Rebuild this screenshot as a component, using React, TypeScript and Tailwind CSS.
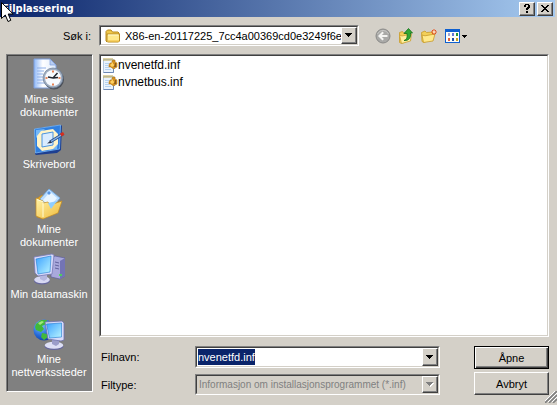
import { useEffect, useRef, useState, type ComponentType, type ReactNode } from "react";

const sunken = "border border-t-[#808080] border-l-[#808080] border-r-white border-b-white";
const sunkenInner = "border border-t-[#404040] border-l-[#404040] border-r-[#d4d0c8] border-b-[#d4d0c8]";
const raised =
  "border border-t-white border-l-white border-r-[#404040] border-b-[#404040] shadow-[inset_-1px_-1px_0_#808080] bg-[#d4d0c8]";

const files = ["nvenetfd.inf", "nvnetbus.inf"];

function RecentIcon() {
  return (
    <svg viewBox="0 0 32 32" className="size-8">
      <defs>
        <linearGradient id="recent-page" x1="0" y1="0" x2="1" y2="0">
          <stop offset="0" stopColor="#8fb8f8" />
          <stop offset="0.4" stopColor="#ffffff" />
          <stop offset="1" stopColor="#dce9fb" />
        </linearGradient>
      </defs>
      <path d="M1 1h16l6 6v23H1z" fill="url(#recent-page)" stroke="#7f9fdc" />
      <path d="M17 1v6h6z" fill="#b7cdf2" stroke="#7f9fdc" strokeWidth="0.7" />
      <path d="M4 10h9M4 13h7M4 16h6M4 19h6M4 22h7M4 25h9" stroke="#8fb0e8" />
      <circle cx="21" cy="21.500" r="10" fill="#4a4f58" />
      <circle cx="20" cy="20" r="10" fill="#9fadc0" stroke="#6e7f98" strokeWidth="0.7" />
      <circle cx="20" cy="20" r="8" fill="#f6faff" />
      <path d="M20 12.500v2M20 25.500v2M12.500 20h2M25.500 20h2" stroke="#e2622a" strokeWidth="1.6" />
      <path d="M24.500 15l-4.500 5-5-1M20 20l5-.5" stroke="#20252f" strokeWidth="1.5" fill="none" />
    </svg>
  );
}

function DesktopIcon() {
  return (
    <svg viewBox="0 0 32 32" className="size-8">
      <path d="M2 6l4-1 22-3 1 1-1 24-4 3-21 2-1-1z" fill="#1d3f91" />
      <path d="M1.500 6l26-4-1 24-24 4z" fill="#2f7fe0" stroke="#78b7f5" strokeWidth="0.8" />
      <path d="M3 7l9-1-9 9zM25 18l-1 8-9 1z" fill="#75b8f7" />
      <path d="M8 8l12-2 5 5v10l-5 5-11 2-5-5V13z" fill="#fff4c8" />
      <path d="M9 11l11-2v13L9 24z" fill="#d9ecff" stroke="#4a94df" />
      <path d="M17 19l13-8" stroke="#274f88" strokeWidth="3" />
      <path d="M17 19l12-7.400" stroke="#8ab4e8" strokeWidth="1.3" />
      <path d="M27 10.500l3-1.500 1.500 2.600-3 1.800z" fill="#d62c1c" />
      <path d="M14 20.500l3.400-2.800 1.400 2.400z" fill="#30384c" />
    </svg>
  );
}

function DocumentsIcon() {
  return (
    <svg viewBox="0 0 32 32" className="size-8">
      <defs>
        <linearGradient id="doc-folder" x1="0" y1="0" x2="1" y2="1">
          <stop offset="0" stopColor="#fff3a9" />
          <stop offset="1" stopColor="#efb938" />
        </linearGradient>
      </defs>
      <path d="M3 11l6-4 3 2 13-1v11L10 31l-6-2z" fill="#e4a82e" stroke="#b78122" strokeWidth="0.6" />
      <path d="M7 11L16 1l11 9-9 11z" fill="#b8dcff" stroke="#6da9e6" strokeWidth="0.8" />
      <path d="M10 12l7-8 7 6-7 9z" fill="#e8f5ff" />
      <path d="M16 3l2 2-2 2-2-2z" fill="#5795e4" />
      <path d="M3 10l7 3v2l5-1 2 3 12-4-4 12-15 6-7-3z" fill="url(#doc-folder)" stroke="#c18b24" strokeWidth="0.7" />
      <path d="M15 15l9-2-6 8z" fill="#8fceff" />
      <path d="M4 11.500l6 2.300V29" stroke="#fffbd5" fill="none" />
    </svg>
  );
}

function ComputerIcon() {
  return (
    <svg viewBox="0 0 32 32" className="size-8">
      <defs>
        <linearGradient id="pc-screen" x1="0" y1="0" x2="1" y2="1">
          <stop offset="0" stopColor="#3ca1ff" />
          <stop offset="1" stopColor="#b9f5ff" />
        </linearGradient>
      </defs>
      <path d="M18 5l4-2 10 2v18l-5 3-9-2z" fill="#a9a9dc" stroke="#5e5f9c" strokeWidth="0.7" />
      <path d="M27 8l5-3v18l-5 3z" fill="#7374b4" />
      <path d="M22 9l4 1M22 12l4 1M22 15l4 1" stroke="#62639e" />
      <path d="M26 22h3" stroke="#49e149" strokeWidth="1.7" />
      <ellipse cx="9" cy="28" rx="8" ry="3.500" fill="#66679d" />
      <ellipse cx="9" cy="26.800" rx="7.800" ry="3.500" fill="#d7d8f2" />
      <path d="M7 21h7v5l-3 2-4-2z" fill="#b5b7df" />
      <path d="M1 4l18-3 2 1-2 19-14 2-3-3z" fill="#d8dbfa" stroke="#7779b5" strokeWidth="0.8" />
      <path d="M3 6l15-3-1 16-12 2z" fill="url(#pc-screen)" stroke="#217cd2" strokeWidth="0.6" />
    </svg>
  );
}

function NetworkIcon() {
  return (
    <svg viewBox="0 0 32 32" className="size-8">
      <defs>
        <radialGradient id="globe" cx="0.35" cy="0.3" r="0.8">
          <stop offset="0" stopColor="#7fc8ff" />
          <stop offset="0.6" stopColor="#2367d8" />
          <stop offset="1" stopColor="#123a92" />
        </radialGradient>
      </defs>
      <circle cx="11" cy="12" r="10.500" fill="url(#globe)" />
      <path d="M3 6l5-4 6 0-1 4-4 2 2 3-3 3-5-2-1-3zM9 15l5 1 1 3-4 3-3-3zM17 3l4 5-3 1-3-3z" fill="#42b83b" />
      <path d="M5 5l4-2 2 1-4 3z" fill="#a1e978" />
      <ellipse cx="21" cy="28.500" rx="9.500" ry="3.500" fill="#66679d" />
      <ellipse cx="21" cy="27.300" rx="9.300" ry="3.500" fill="#dddff5" />
      <path d="M19 20h7v6l-3 2-4-2z" fill="#9b9dc9" />
      <path d="M12 4l17-1 2 2v17l-3 1-13-2z" fill="#d8dbfa" stroke="#6e70aa" strokeWidth="0.8" />
      <path d="M13.500 6l15-1v14l-12 1z" fill="url(#pc-screen)" stroke="#217cd2" strokeWidth="0.6" />
    </svg>
  );
}

function FolderIcon() {
  return (
    <svg viewBox="0 0 16 16" className="size-4">
      <path d="M1 3.500L2.500 2H6l1.500 2H13l1 1v2H4L2 14l-1-1z" fill="#efc84b" stroke="#b88a1e" />
      <path d="M2 13.500V6h12.500V13l-1 1h-11z" fill="#ffe98b" stroke="#b88a1e" />
      <path d="M3 7h10.500" stroke="#fffbd0" />
      <path d="M3 13h11" stroke="#f0bb3f" />
    </svg>
  );
}

function InfIcon() {
  return (
    <svg viewBox="0 0 16 16" className="size-4 shrink-0">
      <path d="M1.500 2.500h10v13h-10z" fill="#eaf3fd" stroke="#b4c8de" />
      <path d="M11.500 12v3.500h-10" stroke="#6d88b4" fill="none" />
      <path d="M2 1v3M4 1v3M6 1v3M8 1v3M10 1v3" stroke="#c0a64b" />
      <path d="M3 6.500h4M3 8.500h3M3 10.500h4M3 12.500h6" stroke="#b5d3f0" />
      <path d="M10 4l1-1h2v2l2 1v4l-2 1-1 1-2-1-1-1H7V8l1-2h2z" fill="#d69221" stroke="#a5701b" strokeWidth="0.6" />
      <path d="M8 8l3-3v2l2 1-3 2z" fill="#ffd060" />
      <path d="M13 6h1v4h-2z" fill="#8a591b" />
    </svg>
  );
}

function BackIcon() {
  return (
    <svg viewBox="0 0 16 16" className="size-4">
      <circle cx="8" cy="8" r="7" fill="#a9a9a7" stroke="#8a8a88" />
      <path d="M2.500 6A6 6 0 0 1 13.500 6" stroke="#c6c6c4" fill="none" />
      <path d="M12.500 8H5M8.200 4.200L4.400 8l3.800 3.800" stroke="#f4f4f2" strokeWidth="2" fill="none" />
    </svg>
  );
}

function UpIcon() {
  return (
    <svg viewBox="0 0 16 16" className="size-4">
      <path d="M1.500 4.500l3-1 1 1.500 7-1V12l-9 3.500-2-1z" fill="#f3cf58" stroke="#c69a2b" strokeWidth="0.8" />
      <path d="M1.500 7l2.500 1 9.500-2-1 7-9 2.500z" fill="#ffef9f" stroke="#c69a2b" strokeWidth="0.7" />
      <path d="M6 12.500c3-1 3.500-3.500 3-7H6l4.500-5 4 4.500h-2c.5 4-1 8-6.500 7.500z" fill="#33a834" stroke="#14701b" strokeWidth="0.8" />
    </svg>
  );
}

function NewFolderIcon() {
  return (
    <svg viewBox="0 0 16 16" className="size-4">
      <path d="M.5 4.500L4 3l1.500 1.500L12 4v6L3 14.500l-2-1z" fill="#f3cf58" stroke="#c69a2b" strokeWidth="0.8" />
      <path d="M1 7l3 .8L14 6l-2 7-9.500 1.500z" fill="#ffe98c" stroke="#c69a2b" strokeWidth="0.8" />
      <path d="M13 1v6M10 4h6M11 2l4 4M15 2l-4 4" stroke="#e8501e" />
      <circle cx="13" cy="4" r="1.200" fill="#ffd9b4" />
    </svg>
  );
}

function ViewIcon() {
  return (
    <svg viewBox="0 0 24 16" className="h-4 w-6" shapeRendering="crispEdges">
      <rect x="1" y="1" width="15" height="14" rx="1" fill="#0d5fd0" />
      <rect x="2" y="4" width="13" height="10" fill="#fdfdf8" />
      <rect x="4" y="5" width="2" height="3" fill="#9fa6d8" />
      <rect x="8" y="5" width="2" height="3" fill="#6576d8" />
      <rect x="12" y="5" width="2" height="3" fill="#23963a" />
      <rect x="4" y="10" width="2" height="3" fill="#e3623b" />
      <rect x="8" y="10" width="2" height="3" fill="#1e4fa8" />
      <rect x="12" y="10" width="2" height="3" fill="#c9a11e" />
      <path d="M18 7h5v1h-1v1h-1v1h-1V9h-1V8h-1z" fill="#000" />
    </svg>
  );
}

function DownArrow({ disabled = false }: { disabled?: boolean }) {
  return (
    <svg viewBox="0 0 8 5" className="h-[5px] w-2" shapeRendering="crispEdges">
      {disabled && <path d="M1 1h7v1H7v1H6v1H5v1H4V4H3V3H2V2H1z" fill="#fff" />}
      <path d="M0 0h7v1H6v1H5v1H4v1H3V3H2V2H1V1H0z" fill={disabled ? "#808080" : "#000"} />
    </svg>
  );
}

function Cursor() {
  return (
    <svg viewBox="0 0 13 21" className="pointer-events-none absolute top-[2px] left-[1px] z-10 h-[21px] w-[13px]">
      <path d="M.5.5v16l3.800-3.500 2.700 6.500 2.800-1.200L7.200 12h5z" fill="#fff" stroke="#000" />
    </svg>
  );
}

type Place = { label: string; icon: ComponentType };

const places: Place[] = [
  { label: "Mine siste\ndokumenter", icon: RecentIcon },
  { label: "Skrivebord", icon: DesktopIcon },
  { label: "Mine\ndokumenter", icon: DocumentsIcon },
  { label: "Min datamaskin", icon: ComputerIcon },
  { label: "Mine\nnettverkssteder", icon: NetworkIcon }
];

const tools = [
  { label: "Tilbake", icon: BackIcon },
  { label: "Opp ett nivå", icon: UpIcon },
  { label: "Opprett ny mappe", icon: NewFolderIcon }
];

function Sunken({ children, className = "" }: { children: ReactNode; className?: string }) {
  return (
    <div className={`${sunken} ${className}`}>
      <div className={`flex h-full ${sunkenInner}`}>{children}</div>
    </div>
  );
}

function ArrowBox({ disabled = false }: { disabled?: boolean }) {
  return (
    <span className={`pointer-events-none flex w-4 shrink-0 items-center justify-center ${raised}`}>
      <DownArrow disabled={disabled} />
    </span>
  );
}

function PlacesBar() {
  return (
    <nav className={`mb-[3px] w-[87px] shrink-0 ${sunken}`}>
      <div className="h-full border-t border-l border-[#404040] bg-[#808080] pt-[2px] pr-[2px]">
        {places.map(({ label, icon: Icon }) => (
          <button key={label} className="flex h-[65px] w-full flex-col items-center gap-[3px] text-center leading-[13px] text-white">
            <Icon />
            <span className="whitespace-pre-line">{label}</span>
          </button>
        ))}
      </div>
    </nav>
  );
}

export default function App() {
  const [name, setName] = useState("nvenetfd.inf");
  const nameRef = useRef<HTMLInputElement>(null);

  useEffect(() => {
    nameRef.current?.focus();
    nameRef.current?.select();
  }, []);

  return (
    <div className="relative flex min-h-screen flex-col bg-[#d4d0c8] font-['Liberation_Sans',Arial,sans-serif] text-[11px] leading-4 text-black">
      <Cursor />
      <header className="mr-[2px] flex h-[17px] items-center justify-between bg-linear-to-r/srgb from-[#0a246a] to-[#a6caf0] pr-[2px] pl-[2px]">
        <h1 className="font-['DejaVu_Sans_Condensed','DejaVu_Sans',sans-serif] text-[11px] font-bold text-white">Filplassering</h1>
        <div className="flex gap-[2px]">
          <button aria-label="Hjelp" className={`flex h-[14px] w-4 items-center justify-center ${raised}`}>
            <svg viewBox="0 0 6 9" className="h-[9px] w-[6px]" shapeRendering="crispEdges">
              <path d="M1 0h4v1h1v3H5v1H4v1H2V4h1V3h1V1H2v2H0V1h1zM2 7h2v2H2z" />
            </svg>
          </button>
          <button aria-label="Lukk" className={`flex h-[14px] w-4 items-center justify-center ${raised}`}>
            <svg viewBox="0 0 8 7" className="h-[7px] w-2" shapeRendering="crispEdges">
              <path d="M0 0h2v1h1v1h2V1h1V0h2v1H7v1H6v1H5v1h1v1h1v1h1v1H6V6H5V5H3v1H2v1H0V6h1V5h1V4h1V3H2V2H1V1H0z" />
            </svg>
          </button>
        </div>
      </header>

      <div className="mt-2 flex h-[21px] items-center pr-2 pl-[6px]">
        <label htmlFor="folder" className="w-[93px] shrink-0 pr-2 text-right">
          Søk i:
        </label>
        <Sunken className="h-[21px] w-[260px] bg-white">
          <span className="flex w-5 shrink-0 items-center justify-end">
            <FolderIcon />
          </span>
          <select id="folder" className="min-w-0 flex-1 appearance-none overflow-hidden pl-1 whitespace-nowrap outline-none">
            <option>X86-en-20117225_7cc4a00369cd0e3249f6e8</option>
          </select>
          <ArrowBox />
        </Sunken>
        <div className="ml-4 flex items-center gap-[7px]">
          {tools.map(({ label, icon: Icon }) => (
            <button key={label} aria-label={label}>
              <Icon />
            </button>
          ))}
          <button aria-label="Visning">
            <ViewIcon />
          </button>
        </div>
      </div>

      <main className="mt-2 flex flex-1 gap-[6px] pr-2 pb-[10px] pl-[6px]">
        <PlacesBar />
        <div className="flex min-w-0 flex-1 flex-col">
          <Sunken className="flex-1 bg-white">
            <ul className="pl-px text-[12px]">
              {files.map((file) => (
                <li key={file} className="flex h-[17px] items-center">
                  <InfIcon />
                  <span>{file}</span>
                </li>
              ))}
            </ul>
          </Sunken>

          <form className="mt-[9px] flex justify-between pl-[2px]" onSubmit={(event) => event.preventDefault()}>
            <div className="flex flex-col gap-[6px]">
              <div className="flex items-center">
                <label htmlFor="name" className="w-[94px]">
                  Filnavn:
                </label>
                <Sunken className="h-[22px] w-[245px] bg-white">
                  <input
                    id="name"
                    ref={nameRef}
                    value={name}
                    onChange={(event) => setName(event.target.value)}
                    className="min-w-0 flex-1 pl-px outline-none selection:bg-[#0a246a] selection:text-white"
                  />
                  <button type="button" aria-label="Tidligere filnavn" className="flex">
                    <ArrowBox />
                  </button>
                </Sunken>
              </div>
              <div className="flex items-center">
                <label htmlFor="type" className="w-[94px]">
                  Filtype:
                </label>
                <Sunken className="h-[21px] w-[245px]">
                  <select id="type" disabled className="min-w-0 flex-1 appearance-none pl-[2px] text-[10px] text-[#808080] opacity-100">
                    <option>Informasjon om installasjonsprogrammet (*.inf)</option>
                  </select>
                  <ArrowBox disabled />
                </Sunken>
              </div>
            </div>
            <div className="flex flex-col gap-[3px]">
              <button type="submit" className="h-[23px] w-[75px] border border-black bg-[#d4d0c8] shadow-[inset_1px_1px_0_#fff,inset_-1px_-1px_0_#404040,inset_-2px_-2px_0_#808080]">
                Åpne
              </button>
              <button type="button" className={`h-[23px] w-[75px] ${raised}`}>
                Avbryt
              </button>
            </div>
          </form>
        </div>
      </main>

      <svg viewBox="0 0 12 12" className="pointer-events-none absolute right-0 bottom-[2px] size-3">
        <path d="M0 12L12 0M4 12l8-8M8 12l4-4" stroke="#808080" strokeWidth="1.600" />
        <path d="M-1 11L11-1M3 11l9-9M7 11l5-5" stroke="#fff" />
      </svg>
    </div>
  );
}
